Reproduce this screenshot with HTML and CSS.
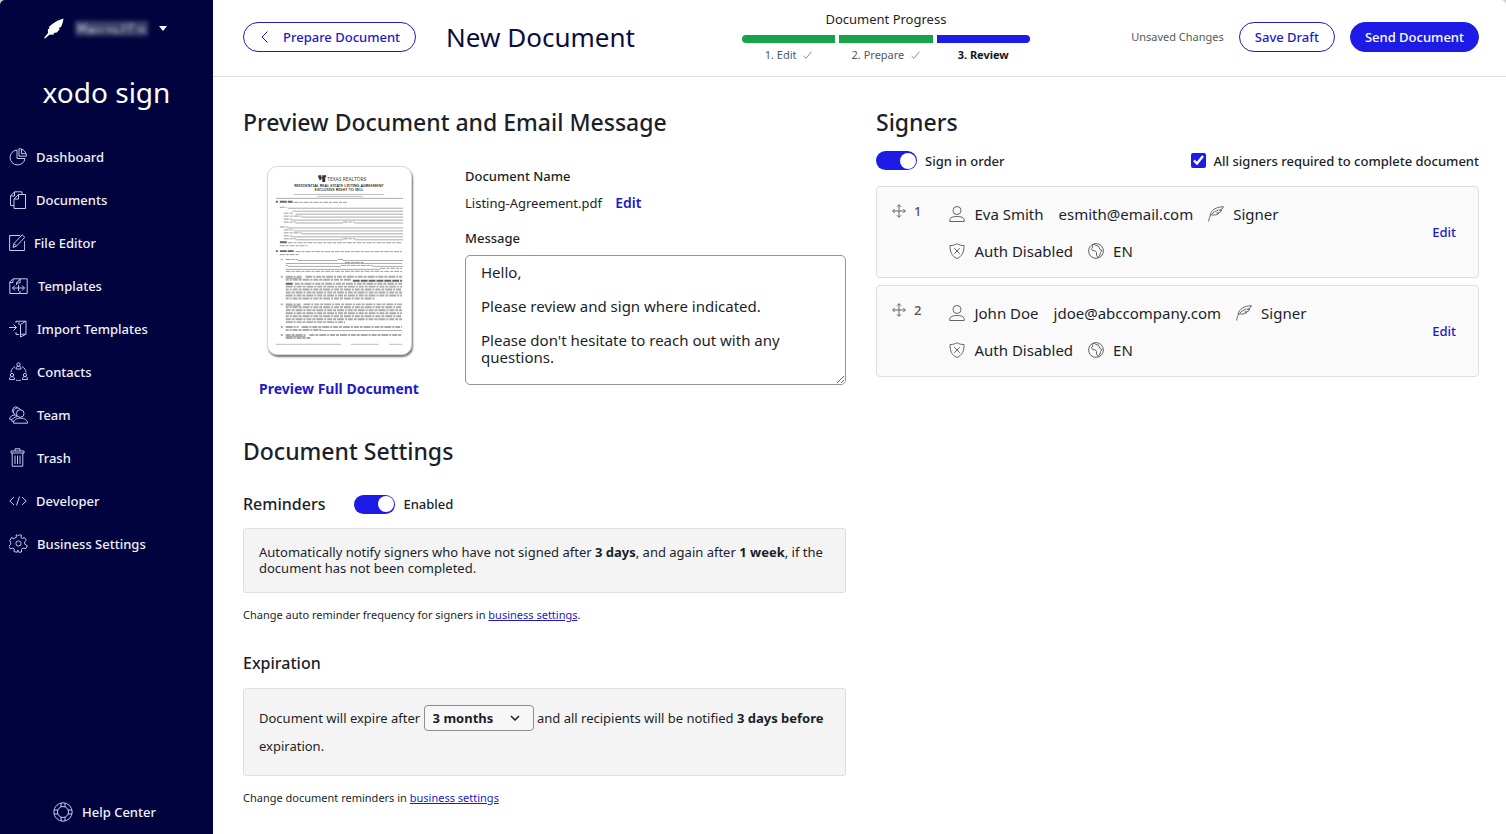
FILE: index.html
```html
<!DOCTYPE html>
<html lang="en">
<head>
  <meta charset="UTF-8">
  <meta name="viewport" content="width=device-width, initial-scale=1">
  <title>New Document - Xodo Sign</title>
  <link rel="stylesheet" href="styles.css">
</head>
<body>
<div class="app">

  <!-- sidebar -->
  <aside class="sidebar">
    <button class="account" type="button" aria-label="Account menu">
      <svg width="20" height="21" viewBox="0 0 20 21" fill="#fff"><path d="M19.500 0.500C14 2 8 5.500 5 9L5.500 10.500 3.800 11.200 4 15 0 20 1 20.500 5.500 16.800 10 16.500 9.800 15 12.800 14.500 15.500 11.500 15 10 17 9C18.500 6 19 3.500 19.500 0.500Z"/></svg>
      <svg class="account-name" width="73" height="15" viewBox="0 0 73 15"><rect width="73" height="15" fill="#3d4068"/><path d="M4 11V4l3 5 3-5v7M14 8h5v3h-5zM23 7v4M27 7v4M31 8h5v3M40 7v4h4M47 12l3-9M55 3v8M54 4h5M62 8h4v3M69 7v4" fill="none" stroke="#9a9cb8" stroke-width="2"/></svg>
      <svg width="8" height="5" viewBox="0 0 8 5" fill="#fff"><path d="M0 0h8L4 5z"/></svg>
    </button>
    <div class="brand">xodo sign</div>

    <nav class="menu">
      <a href="#"><svg width="18" height="18" viewBox="0 0 18 18"><path d="M8 2a7.500 7.500 0 1 0 8 8.500H8z"/><path d="M10 .6v7.600h7.500A7.500 7.500 0 0 0 10 .6zM12.500 1.200v4.500h4.300"/></svg>Dashboard</a>
      <a href="#"><svg width="18" height="18" viewBox="0 0 18 18"><path d="M5 14.500H1.500V5L5.500.8h7.500V3M1.500 5h4V.8M5 17.500V8l4.500-4.500h7v14zM5 8h4.500V3.500"/></svg>Documents</a>
      <a href="#"><svg width="16" height="18" viewBox="0 0 16 18"><path d="M11 1.500H.6v15h15V7"/><path d="M4 13.500l1-4L13.200.8l2.600 2.500L7.500 12zM5 9.500L7.500 12"/></svg>File Editor</a>
      <a href="#"><svg width="20" height="18" viewBox="0 0 20 18"><path d="M.8 16.500V5L4 1.800h14.200v14.700zM.8 5.500H4V2M7.500 6L11 2M7.500 6h3.500V2M7.500 6v2M11 14v2"/><path d="M3.500 11h12M6 8.500L3.500 11 6 13.500M13 8.500l2.500 2.500-2.500 2.500M9.500 8v6"/></svg>Templates</a>
      <a href="#"><svg width="19" height="18" viewBox="0 0 19 18"><path d="M0 7.500h7M4.500 4.500l3 3-3 3M7 3V1.200h10v13h-5.500M7 12v2.500h3"/><path d="M11.500 4.500L17 1.200M17 14.200L11.500 17V4.500M10 2v3"/></svg>Import Templates</a>
      <a href="#"><svg width="19" height="19" viewBox="0 0 19 19"><circle cx="9.500" cy="2.500" r="1.700"/><path d="M7 7V5.500L8.500 4.300h2L12 5.500V7z"/><circle cx="3" cy="13" r="1.600"/><path d="M.6 17.500V16L2 14.600h2L5.500 16v1.500z"/><circle cx="16" cy="13" r="1.600"/><path d="M13.500 17.500V16l1.500-1.400h2l1.400 1.400v1.500zM6 4.500C3.500 6 2 8 2 10.500M13 4.500c2.500 1.500 4 3.500 4 6M7 18c2 .8 3 .8 5 0"/></svg>Contacts</a>
      <a href="#"><svg width="19" height="18" viewBox="0 0 19 18"><circle cx="11.200" cy="7.500" r="3.800"/><path d="M8 9.500A3.800 3.800 0 1 1 11.500 3.700M5 7.500A3.600 3.600 0 1 1 9 1.500M4.500 17.200h14c0-3-2.500-5-7.300-5-4 0-6.500 2-6.700 5zM2.500 15c.8-2.500 2.500-4 5.500-4.300M.6 13.200C1 10.500 3 9 6 9M.6 13.200h2.200M2.500 15.200H5"/></svg>Team</a>
      <a href="#"><svg width="19" height="19" viewBox="0 0 19 19"><path d="M2 5V3h13v2zM6 3V.8h5V3M3.200 5v13.200h10.600V5M6 7.500v8.500M8.500 7.500v8.500M11 7.500v8.500"/></svg>Trash</a>
      <a href="#"><svg width="18" height="18" viewBox="0 0 18 18"><path d="M5 5L.8 9 5 13M13 5l4.200 4L13 13M10.500 4.500l-3 9"/></svg>Developer</a>
      <a href="#"><svg width="19" height="19" viewBox="0 0 19 19"><path d="M7.500 3.200L7 1.200 8.200.7l1.300 1.300L10.800.7l1.700.5-.6 2.400 1.300.8 2.200-.9 1.900 2.800-1.700 1.800.2 2.200 2.500 1.400-1.400 2.800-2.800-.4-1.700 1.200.2 2.700-2.900.3-.9-2.300-.9 2.300-2.900-.8.3-2.400-1.600-.9-2.400.6-1.600-2.700 2-1.700V8.200L.8 6.600l1.600-2.900 2.500.8z" stroke-linejoin="round"/><circle cx="9.500" cy="9.500" r="2.600"/></svg>Business Settings</a>
    </nav>

    <a class="help" href="#"><svg width="20" height="20" viewBox="0 0 20 20"><circle cx="10" cy="10" r="9.200"/><circle cx="10" cy="10" r="5.500"/><path d="M8 1v4M12 1v4M8 15v4M12 15v4M1 8h4M1 12h4M15 8h4M15 12h4"/></svg>Help Center</a>
  </aside>

  <div class="page">
    <header class="topbar">
      <button class="btn btn-back" type="button"><svg width="7" height="12" viewBox="0 0 7 12"><path d="M6.500.5L1 6l5.500 5.500"/></svg>Prepare Document</button>
      <h1>New Document</h1>

      <div class="progress">
        <div class="progress-title">Document Progress</div>
        <ol class="steps">
          <li class="done">1. Edit <svg width="9" height="8" viewBox="0 0 9 8"><path d="M.5 5L3 7.300 8.500.7"/></svg></li>
          <li class="done">2. Prepare <svg width="9" height="8" viewBox="0 0 9 8"><path d="M.5 5L3 7.300 8.500.7"/></svg></li>
          <li class="current">3. Review</li>
        </ol>
      </div>

      <div class="actions">
        <span class="unsaved">Unsaved Changes</span>
        <button class="btn" type="button">Save Draft</button>
        <button class="btn btn-primary" type="button">Send Document</button>
      </div>
    </header>

    <main class="content">
      <div class="column">
        <section>
          <h2>Preview Document and Email Message</h2>
          <div class="preview">
            <div class="preview-doc">
              <svg class="thumb" width="145" height="189" viewBox="0 0 145 189" role="img" aria-label="Listing agreement, page 1">
                <path d="M51 8h3v2h1V8h4v2h-1v5h-3v-4h-1v2h-2v-2h-1z" fill="#333"/>
                <text class="thumb-brand" x="60" y="14">TEXAS REALTORS</text>
                <text class="thumb-title" x="72" y="20" text-anchor="middle">RESIDENTIAL REAL ESTATE LISTING AGREEMENT</text>
                <text class="thumb-title" x="72" y="24" text-anchor="middle">EXCLUSIVE RIGHT TO SELL</text>
                <path class="thumb-small" d="M26 27.500h92M50 29.500h46"/>
                <path class="thumb-line" d="M8 31.500h129"/>
                <path class="thumb-bold" d="M8 35h2M12 35h13M8 85h2M12 85h14M12 76h8M86 115h50M18 118h7"/>
                <path class="thumb-text" d="M26 35.500h54M12 40.500h7M16 46.500h9M16 49.500h18M16 52.500h8M16 55.500h12M76 55.500h12M12 60.500h8M16 63.500h10M16 66.500h18M16 69.500h8M16 72.500h12M76 72.500h12M20 76.500h116M12 79.500h28M28 85.500h108M12 88.500h20M13 93.500h2M18 93.500h12M71 93.500h6M78 96.500h20M18 99.500h2M74 99.500h32M114 102.500h22M18 105.500h118"/>
                <path class="thumb-line" d="M20 41.500h117M25 44.500h112M28 47.500h109M34 50.500h103M24 53.500h113M28 56.500h48M88 56.500h49M20 61.500h117M26 64.500h111M34 67.500h103M24 70.500h113M28 73.500h48M88 73.500h49M30 94.500h40M76 94.500h61M18 97.500h118M20 100.500h54M106 100.500h31M18 103.500h96"/>
                <path class="thumb-dense" d="M18 111h16M38 111h98M18 121h118M18 130h118M18 139h15M36 139h100M18 148h118M18 157h60M18 162h13M34 162h102M18 173h25"/>
                <path class="thumb-dense shift-a" d="M18 114h66M18 124h118M18 133h90M18 142h118M18 151h118M18 165h36M13 111h2M13 139h2"/>
                <path class="thumb-dense shift-b" d="M27 118h109M18 127h118M18 145h118M18 154h118M18 170h20M42 170h94M13 162h2M13 170h2"/>
                <path class="thumb-line" d="M18 112.500h16M18 140.500h15M54 165.500h82M18 171.500h20"/>
                <path class="thumb-small" d="M8 179.500h66M84 179.500h28M123 179.500h13"/>
              </svg>
              <a class="preview-link" href="#">Preview Full Document</a>
            </div>
            <div class="preview-form">
              <div class="label">Document Name</div>
              <div class="file">Listing-Agreement.pdf <a href="#">Edit</a></div>
              <label class="label" for="message">Message</label>
              <textarea id="message">Hello,

Please review and sign where indicated.

Please don't hesitate to reach out with any questions.</textarea>
            </div>
          </div>
        </section>

        <section class="settings">
          <h2>Document Settings</h2>
          <div class="setting-head">
            <h3>Reminders</h3>
            <label class="switch"><input type="checkbox" checked>Enabled</label>
          </div>
          <p class="box">Automatically notify signers who have not signed after <b>3 days</b>, and again after <b>1 week</b>, if the document has not been completed.</p>
          <p class="note">Change auto reminder frequency for signers in <a href="#">business settings</a>.</p>

          <h3 class="expiration">Expiration</h3>
          <p class="box box-expire"><label for="expire">Document will expire after</label>
            <select id="expire"><option>3 months</option><option>6 months</option></select>
            and all recipients will be notified <b>3 days before</b> expiration.</p>
          <p class="note">Change document reminders in <a href="#">business settings</a></p>
        </section>
      </div>

      <section class="column">
        <h2>Signers</h2>
        <div class="signer-options">
          <label class="switch"><input type="checkbox" checked>Sign in order</label>
          <label class="check"><input type="checkbox" checked>All signers required to complete document</label>
        </div>

        <ul class="signers">
          <li class="signer">
            <div class="order"><svg width="14" height="14" viewBox="0 0 14 14"><path d="M7 .7v12.600M.7 7h12.600M5 2.700l2-2 2 2M5 11.300l2 2 2-2M2.700 5l-2 2 2 2M11.300 5l2 2-2 2"/></svg>1</div>
            <div class="details">
              <div class="line">
                <span class="item"><svg width="16" height="16" viewBox="0 0 16 16"><circle cx="8" cy="4.500" r="4"/><path d="M.8 15.500v-2C1.500 11.300 4 10.500 8 10.500s6.500.8 7.200 3v2z"/></svg>Eva Smith</span>
                <span>esmith@email.com</span>
                <span class="item"><svg width="16" height="16" viewBox="0 0 16 16"><path d="M.7 15.500C1 10 4.500 6 10.500 4M2 9.500C3 4 8 1 15.300.7c-.5 2-1.500 3-4 3.500 1 .3 1.800.3 2.500 0-1 2-2.500 2.800-5 2.800M8.800 7c.8.4 1.500.4 2.200.2C9.500 8.800 6.500 9.500 3.500 8.800"/></svg>Signer</span>
              </div>
              <div class="line">
                <span class="item"><svg width="16" height="16" viewBox="0 0 16 16"><path d="M8 .7C6 2 4 2.500 1 2.500.8 9 3 13.500 8 15.500c5-2 7.200-6.500 7-13C12 2.500 10 2 8 .7zM5.200 5.200l5.600 5.600M10.800 5.200l-5.600 5.600"/></svg>Auth Disabled</span>
                <span class="item"><svg width="16" height="16" viewBox="0 0 16 16"><circle cx="8" cy="8" r="7.400"/><path d="M6 .9L4.500 2.500 4.800 4 3.500 5.500l1 2 3 .5 1 1.500v3l1.500 2 2-2.500.5-2.500L14 7.500 12.500 7 11 4.500 10.500 3 8 2.500z"/></svg>EN</span>
              </div>
            </div>
            <a class="edit" href="#">Edit</a>
          </li>
          <li class="signer">
            <div class="order"><svg width="14" height="14" viewBox="0 0 14 14"><path d="M7 .7v12.600M.7 7h12.600M5 2.700l2-2 2 2M5 11.300l2 2 2-2M2.700 5l-2 2 2 2M11.300 5l2 2-2 2"/></svg>2</div>
            <div class="details">
              <div class="line">
                <span class="item"><svg width="16" height="16" viewBox="0 0 16 16"><circle cx="8" cy="4.500" r="4"/><path d="M.8 15.500v-2C1.500 11.300 4 10.500 8 10.500s6.500.8 7.200 3v2z"/></svg>John Doe</span>
                <span>jdoe@abccompany.com</span>
                <span class="item"><svg width="16" height="16" viewBox="0 0 16 16"><path d="M.7 15.500C1 10 4.500 6 10.500 4M2 9.500C3 4 8 1 15.300.7c-.5 2-1.500 3-4 3.500 1 .3 1.800.3 2.500 0-1 2-2.500 2.800-5 2.800M8.800 7c.8.4 1.500.4 2.200.2C9.500 8.800 6.500 9.500 3.500 8.800"/></svg>Signer</span>
              </div>
              <div class="line">
                <span class="item"><svg width="16" height="16" viewBox="0 0 16 16"><path d="M8 .7C6 2 4 2.500 1 2.500.8 9 3 13.500 8 15.500c5-2 7.200-6.500 7-13C12 2.500 10 2 8 .7zM5.200 5.200l5.600 5.600M10.800 5.200l-5.600 5.600"/></svg>Auth Disabled</span>
                <span class="item"><svg width="16" height="16" viewBox="0 0 16 16"><circle cx="8" cy="8" r="7.400"/><path d="M6 .9L4.500 2.500 4.800 4 3.500 5.500l1 2 3 .5 1 1.500v3l1.500 2 2-2.500.5-2.500L14 7.500 12.500 7 11 4.500 10.500 3 8 2.500z"/></svg>EN</span>
              </div>
            </div>
            <a class="edit" href="#">Edit</a>
          </li>
        </ul>
      </section>
    </main>
  </div>

</div>
</body>
</html>
```
FILE: styles.css
```css
* {
  margin: 0; padding: 0; box-sizing: border-box;
}

html {
  background: #c9ccd2;
}

body {
  font-family: 'Noto Sans', sans-serif;
  font-size: 13px;
  line-height: 16px;
  color: #1b1f2a;
}

a {
  color: #2119c8;
}

button, select, textarea {
  font-family: inherit;
  color: inherit;
}

ul, ol {
  list-style: none;
}

svg {
  flex-shrink: 0;
}

.app {
  display: flex;
  min-height: 100vh;
  background: #fff;
  border-radius: 5px 5px 0 0;
  overflow: hidden;
}

/* sidebar */
.sidebar {
  display: flex;
  flex-direction: column;
  width: 213px;
  flex-shrink: 0;
  background: #00033d;
  color: #fff;
}

.account {
  display: flex;
  align-items: center;
  justify-content: center;
  gap: 11px;
  height: 56px;
  padding-right: 3px;
  background: none;
  border: none;
  cursor: pointer;
}

.account-name {
  filter: blur(2px);
}

.brand {
  padding: 18px 0 25px;
  font-size: 28px;
  line-height: 36px;
  text-align: center;
}

.menu a, .help {
  display: flex;
  align-items: center;
  gap: 9px;
  padding-left: 9px;
  height: 43px;
  color: #f0f1fa;
  font-weight: 500;
  text-decoration: none;
}

.menu svg, .help svg {
  fill: none;
  stroke: #c6c9ee;
}

.sidebar .help {
  justify-content: center;
  margin-top: auto;
  padding: 0 4px 2px 0;
}

/* top bar */
.page {
  flex: 1;
  min-width: 0;
}

.topbar {
  display: grid;
  grid-template-columns: auto auto 288px 1fr;
  align-items: center;
  height: 77px;
  padding: 0 27px 2px 30px;
  border-bottom: 1px solid #e0e0e2;
}

.btn {
  display: flex;
  align-items: center;
  height: 30px;
  padding: 0 15px;
  background: #fff;
  border: 1px solid #2119c8;
  border-radius: 15px;
  color: #2119c8;
  font-size: 13px;
  font-weight: 500;
  white-space: nowrap;
  cursor: pointer;
}

.btn-back {
  gap: 15px;
  padding-left: 17px;
}

.btn-back svg {
  fill: none;
  stroke: #2119c8;
}

.btn-primary {
  padding: 0 14px;
  background: #1c1ce6;
  border-color: #1c1ce6;
  color: #fff;
}

h1 {
  margin: 0 107px 0 30px;
  font-size: 26px;
  font-weight: 400;
  line-height: 32px;
  color: #0b0e3c;
  white-space: nowrap;
}

.progress-title {
  margin-bottom: 8px;
  text-align: center;
}

.steps {
  display: grid;
  grid-template-columns: repeat(3, 1fr);
  gap: 4px;
  font-size: 11px;
  color: #555a63;
  text-align: center;
}

.steps li::before {
  content: "";
  display: block;
  height: 8px;
  margin-bottom: 4px;
  background: #16a34a;
}

.steps li:first-child::before {
  border-radius: 4px 0 0 4px;
}

.steps .current {
  color: #14171f;
  font-weight: bold;
}

.steps .current::before {
  background: #1c1ce6;
  border-radius: 0 4px 4px 0;
}

.steps svg {
  margin-left: 4px;
  fill: none;
  stroke: #8a8d93;
}

.actions {
  display: flex;
  align-items: center;
  justify-content: flex-end;
  gap: 15px;
}

.unsaved {
  font-size: 11px;
  color: #555a5e;
}

/* content */
.content {
  display: grid;
  grid-template-columns: 1fr 1fr;
  gap: 30px;
  padding: 29px 27px 28px 30px;
}

h2 {
  font-size: 23px;
  font-weight: 500;
  line-height: 32px;
}

h3 {
  font-size: 16px;
  font-weight: 500;
  line-height: 20px;
}

.label {
  display: block;
  font-weight: 500;
}

.preview {
  display: flex;
  gap: 30px;
  padding-top: 28px;
}

.preview-doc {
  display: flex;
  flex-direction: column;
  align-items: center;
  width: 192px;
}

.thumb {
  border: 1px solid #d8d8d8;
  border-radius: 10px;
  background: #fff;
  box-shadow: 1px 2px 2px #777;
}

.thumb-brand {
  font-size: 5px;
  fill: #444;
}

.thumb-title {
  font-size: 4px;
  font-weight: 500;
}

.thumb-line {
  stroke: #aaa;
}

.thumb-text {
  stroke: #999;
  stroke-dasharray: 5 1 3 1;
}

.thumb-dense {
  stroke: #aaa;
  stroke-width: 2;
  stroke-dasharray: 7 1 2 1 5 1 3 1;
}

.shift-a {
  stroke-dashoffset: 4;
}

.shift-b {
  stroke-dashoffset: 11;
}

.thumb-bold {
  stroke: #666;
  stroke-width: 2;
  stroke-dasharray: 7 1;
}

.thumb-small {
  stroke: #bbb;
}

.preview-link {
  margin-top: 26px;
  font-size: 14px;
  font-weight: bold;
  text-decoration: none;
}

.preview-form {
  flex: 1;
  padding-top: 2px;
}

.file {
  margin: 11px 0 19px;
}

.file a {
  margin-left: 10px;
  font-size: 14px;
  font-weight: 600;
  text-decoration: none;
}

textarea {
  display: block;
  width: 100%;
  height: 130px;
  margin-top: 9px;
  padding: 8px 15px;
  border: 1px solid #949494;
  border-radius: 5px;
  font-size: 15px;
  line-height: 17px;
}

.settings {
  margin-top: 38px;
}

.setting-head {
  display: flex;
  align-items: center;
  gap: 29px;
  margin: 27px 0 14px;
}

.box {
  padding: 15px;
  background: #f4f4f4;
  border: 1px solid #dfdfdf;
  border-radius: 3px;
  min-height: 65px;
}

.box-expire {
  line-height: 28px;
}

.note {
  margin-top: 14px;
  font-size: 11px;
}

.expiration {
  margin: 30px 0 15px;
}

select {
  appearance: none;
  width: 110px;
  height: 26px;
  padding: 0 8px;
  border: 1px solid #8e8e8e;
  border-radius: 4px;
  background: #f7f7f7 url("data:image/svg+xml,%3Csvg xmlns='http://www.w3.org/2000/svg' width='10' height='6' fill='none' stroke='%23222' stroke-width='1.500'%3E%3Cpath d='M1 1l4 4 4-4'/%3E%3C/svg%3E") no-repeat right 13px center;
  font-size: 13px;
  font-weight: bold;
}

/* toggles */
.switch, .check {
  display: flex;
  align-items: center;
  gap: 8px;
  font-weight: 500;
}

.switch input {
  appearance: none;
  display: flex;
  align-items: center;
  justify-content: flex-end;
  width: 41px;
  height: 19px;
  padding: 1px;
  border-radius: 10px;
  background: #1c1ce6;
}

.switch input::before {
  content: "";
  width: 16px;
  height: 16px;
  border-radius: 50%;
  background: #fff;
}

.switch input:not(:checked) {
  justify-content: flex-start;
  background: #999;
}

.check input {
  width: 15px;
  height: 15px;
  accent-color: #1c1ce6;
}

/* signers */
.signer-options {
  display: flex;
  justify-content: space-between;
  margin: 13px 0 16px;
}

.signers {
  display: grid;
  gap: 7px;
}

.signer {
  display: flex;
  align-items: center;
  gap: 28px;
  min-height: 92px;
  padding: 16px 22px 16px 15px;
  border: 1px solid #dedfe0;
  border-radius: 4px;
  background: #fafafa;
}

.signer svg {
  fill: none;
  stroke: #62656b;
}

.order {
  display: flex;
  align-items: center;
  align-self: flex-start;
  gap: 8px;
  color: #50555e;
  font-weight: 500;
}

.details {
  display: grid;
  gap: 17px;
  flex: 1;
  font-size: 15px;
  line-height: 20px;
}

.line, .item {
  display: flex;
  align-items: center;
}

.line {
  gap: 15px;
}

.item {
  gap: 9px;
}

.edit {
  font-weight: 500;
  text-decoration: none;
}
```
